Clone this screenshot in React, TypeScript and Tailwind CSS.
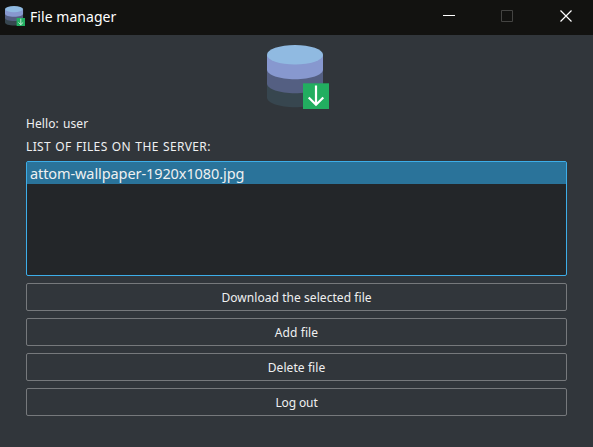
function DatabaseIcon({ className }: { className: string }) {
  return (
    <svg className={className} viewBox="0 0 62 64" preserveAspectRatio="none" aria-hidden="true">
      <path d="M0 37v15.5c0 5.5 12.5 9.7 28 9.7s28-4.200 28-9.700V37z" fill="#37464f" />
      <path d="M0 24v14.500c0 5.500 12.500 9.700 28 9.700s28-4.200 28-9.700V24z" fill="#545f82" />
      <path d="M0 10v14.500c0 5.500 12.500 9.700 28 9.700s28-4.200 28-9.700V10z" fill="#8798cf" />
      <ellipse cx="28" cy="9.800" rx="28" ry="9.800" fill="#90bae1" />
      <path d="M36 38.300h26V64H36z" fill="#22ae60" />
      <path d="M49 40.500v19M41.700 52.500l7.300 7.300 7.300-7.300" fill="none" stroke="#fff" strokeWidth="2.200" />
    </svg>
  );
}

function TitleBar() {
  return (
    <header className="flex h-[35px] items-center bg-[#121210] pl-[5px] text-white">
      <DatabaseIcon className="mt-[-3px] h-5 w-5" />
      <h1 className="mt-[-2px] ml-[5px] grow font-['Noto_Sans','Open_Sans',sans-serif] text-[14px] leading-5 tracking-[0.050px]">
        File manager
      </h1>
      <svg className="h-[35px] w-[173px]" viewBox="0 0 173 35" fill="none" aria-hidden="true">
        <path d="M23 15.500h12" stroke="#fff" />
        <path d="M81.500 10.500h11v11h-11z" stroke="#444442" />
        <path d="M140.500 10.500l11 11M151.500 10.500l-11 11" stroke="#fff" strokeWidth="1.200" />
      </svg>
    </header>
  );
}

const actions = [
  { label: "Download the selected file", style: "tracking-[0.060px]" },
  { label: "Add file", style: "tracking-[0.080px]" },
  { label: "Delete file", style: "tracking-[0.080px]" },
  { label: "Log out", style: "tracking-[-0.120px]" },
];

export default function App() {
  return (
    <div className="flex h-[447px] w-[593px] flex-col overflow-hidden bg-[#31363b] font-['Noto_Sans','Open_Sans',sans-serif] text-[12px] text-[#eff0f1]">
      <TitleBar />
      <main className="flex flex-col px-[26px] pt-[10px]">
        <DatabaseIcon className="ml-[241px] h-[64px] w-[62px]" />
        <p className="mt-[6px] h-[18px] leading-[18px] tracking-[0.100px] [word-spacing:0.8px]">Hello: user</p>
        <p className="mt-[5px] h-[18px] leading-[18px] tracking-[0.360px] [word-spacing:0.8px]">LIST OF FILES ON THE SERVER:</p>
        <ul className="mt-[5px] h-[115px] rounded-[2px] border border-[#3daee9] bg-[#232629]">
          <li className="h-[22px] bg-[#2a739a] pl-[3px] text-[14.5px] leading-[23px] tracking-[-0.090px]">
            <span>attom-wallpaper-1920x1080.jpg</span>
          </li>
        </ul>
        <div className="mt-[7px] flex flex-col gap-[7px]">
          {actions.map((a) => (
            <button key={a.label} className="flex h-[28px] items-center justify-center rounded-[2px] border border-[#76797c] pt-[2px]">
              <span className={a.style}>{a.label}</span>
            </button>
          ))}
        </div>
      </main>
    </div>
  );
}
